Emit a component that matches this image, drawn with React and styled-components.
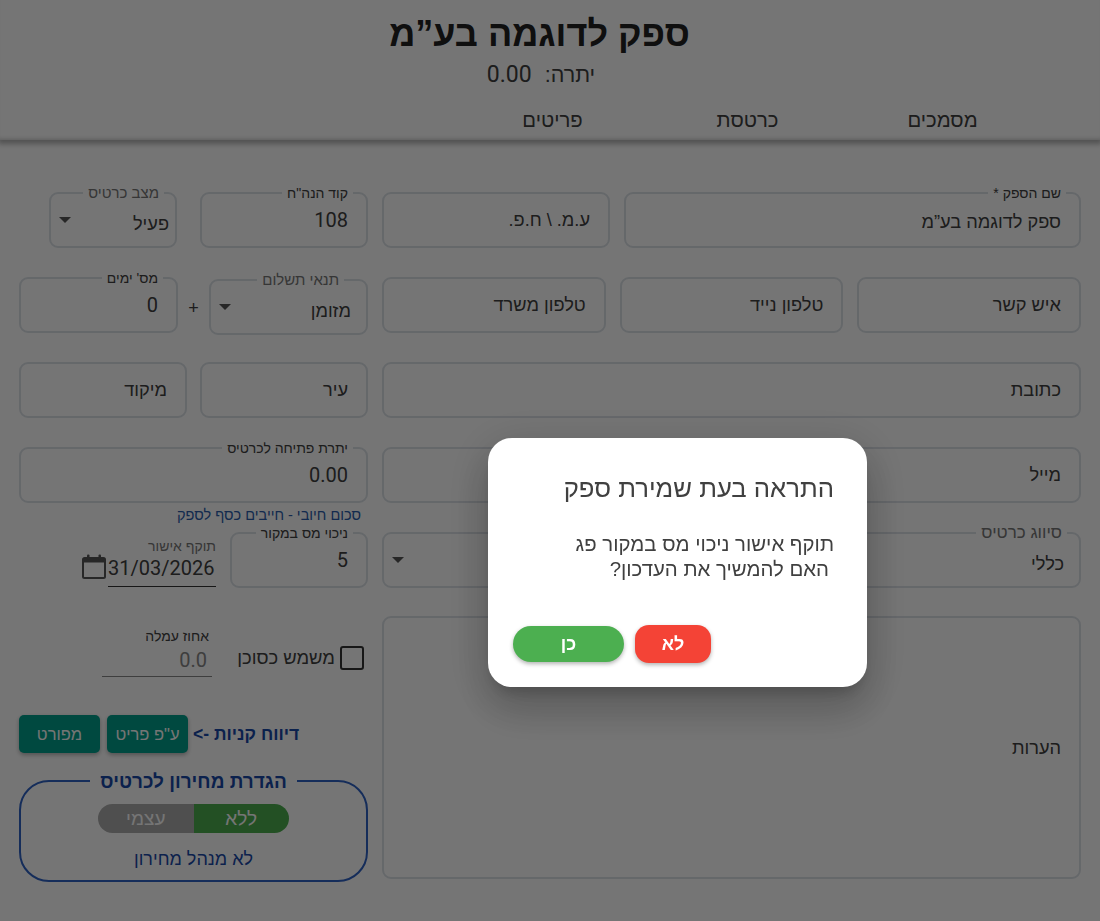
import React from 'react';
import styled, { createGlobalStyle } from 'styled-components';

const FONT = '"Liberation Sans", "Noto Sans", sans-serif';
const INK = '#404040';
const LINE = '#dde2e8';

const GlobalStyle = createGlobalStyle`
  html, body {
    margin: 0;
    padding: 0;
    background: #fff;
    font-family: ${FONT};
    color: ${INK};
  }
  * { box-sizing: border-box; }
`;

function OutlinedField({ label, value, width, grow, select, number, labelSize = 14, labelRight = 13, labelMuted, valueRight, drop }) {
  return (
    <Field $width={width} $grow={grow} $drop={drop}>
      {label && <FieldLabel $size={labelSize} $right={labelRight} $muted={labelMuted}>{label}</FieldLabel>}
      <FieldValue $select={select} $number={number} $filled={!!label} $right={valueRight}>{value}</FieldValue>
      {select && <Arrow />}
    </Field>
  );
}

function CalendarIcon() {
  return (
    <CalendarWrap>
      <svg width="24" height="25" viewBox="0 0 24 25" fill="none">
        <path d="M1 5.5a1.5 1.5 0 0 1 1.5-1.5h19a1.5 1.5 0 0 1 1.5 1.5v17a1.5 1.5 0 0 1-1.5 1.5h-19A1.5 1.5 0 0 1 1 22.5z" stroke="#555" strokeWidth="2" />
        <path d="M1 4.5h22v4H1z" fill="#555" />
        <rect x="5" y="0.5" width="2.5" height="5" rx="1" fill="#555" />
        <rect x="16.5" y="0.5" width="2.5" height="5" rx="1" fill="#555" />
      </svg>
    </CalendarWrap>
  );
}

function App() {
  return (
    <>
      <GlobalStyle />
      <Page dir="rtl">
        <Header>
          <Title>ספק לדוגמה בע”מ</Title>
          <Balance>
            <span>יתרה:</span>
            <BalanceNumber>0.00</BalanceNumber>
          </Balance>
          <Tabs>
            <Tab>מסמכים</Tab>
            <Tab>כרטסת</Tab>
            <Tab>פריטים</Tab>
          </Tabs>
        </Header>

        <Form>
          <MainColumn>
            <Row>
              <OutlinedField label="שם הספק *" value="ספק לדוגמה בע”מ" grow />
              <OutlinedField value="ע.מ. \ ח.פ." width={228} />
            </Row>
            <Row>
              <OutlinedField value="איש קשר" grow />
              <OutlinedField value="טלפון נייד" grow />
              <OutlinedField value="טלפון משרד" grow />
            </Row>
            <Row>
              <OutlinedField value="כתובת" grow />
            </Row>
            <Row>
              <OutlinedField value="מייל" grow />
            </Row>
            <Row>
              <OutlinedField label="סיווג כרטיס" value="כללי" grow select labelSize={17} labelRight={12} labelMuted />
            </Row>
            <Notes>הערות</Notes>
          </MainColumn>

          <SideColumn>
            <SideRow $gap={23}>
              <OutlinedField label='קוד הנה"ח' value="108" width={168} number />
              <OutlinedField label="מצב כרטיס" value="פעיל" width={128} select labelSize={15} labelRight={11} labelMuted valueRight={6} />
            </SideRow>
            <SideRow>
              <OutlinedField label="תנאי תשלום" value="מזומן" width={159} select labelSize={15} labelRight={22} labelMuted drop={2} />
              <Plus>+</Plus>
              <OutlinedField label="מס' ימים" value="0" width={159} number />
            </SideRow>
            <SideRow $gap={13}>
              <OutlinedField value="עיר" width={168} />
              <OutlinedField value="מיקוד" width={168} />
            </SideRow>
            <SideRow $flush>
              <OutlinedField label="יתרת פתיחה לכרטיס" value="0.00" grow number />
            </SideRow>
            <Helper>סכום חיובי - חייבים כסף לספק</Helper>
            <SideRow $gap={14}>
              <OutlinedField label="ניכוי מס במקור" value="5" width={138} number />
              <DateField>
                <DateLabel>תוקף אישור</DateLabel>
                <DateValue dir="ltr">31/03/2026</DateValue>
              </DateField>
              <CalendarIcon />
            </SideRow>
            <AgentRow>
              <CheckLabel>
                <CheckBox />
                משמש כסוכן
              </CheckLabel>
              <Commission>
                <CommissionLabel>אחוז עמלה</CommissionLabel>
                <CommissionValue>0.0</CommissionValue>
              </Commission>
            </AgentRow>
            <ReportRow>
              <ReportTitle>דיווח קניות -&gt;</ReportTitle>
              <TealButton>ע"פ פריט</TealButton>
              <TealButton>מפורט</TealButton>
            </ReportRow>
            <PriceBox>
              <PriceLegend>הגדרת מחירון לכרטיס</PriceLegend>
              <Toggle>
                <ToggleOption $active>ללא</ToggleOption>
                <ToggleOption>עצמי</ToggleOption>
              </Toggle>
              <PriceNote>לא מנהל מחירון</PriceNote>
            </PriceBox>
          </SideColumn>
        </Form>
      </Page>

      <Overlay />
      <Dialog dir="rtl">
        <DialogTitle>התראה בעת שמירת ספק</DialogTitle>
        <DialogBody>
          <div>תוקף אישור ניכוי מס במקור פג</div>
          <IndentedLine>האם להמשיך את העדכון?</IndentedLine>
        </DialogBody>
        <DialogActions>
          <NoButton>לא</NoButton>
          <YesButton>כן</YesButton>
        </DialogActions>
      </Dialog>
    </>
  );
}

const Page = styled.div`
  width: 1100px;
  height: 921px;
  overflow: hidden;
  background: #fff;
`;

const Header = styled.header`
  height: 140px;
  padding-top: 11px;
  display: flex;
  flex-direction: column;
  align-items: center;
  background: #fff;
  box-shadow: 0 2px 5px 2px rgba(0, 0, 0, 0.3), inset 0 -4px 4px -3px rgba(0, 0, 0, 0.2);
`;

const Title = styled.h1`
  margin: 0 0 0 -21px;
  font-size: 36px;
  line-height: 46px;
  font-weight: 700;
  color: #222;
`;

const Balance = styled.div`
  margin: 1px 18px 0 0;
  display: flex;
  align-items: center;
  gap: 13px;
  font-size: 21.5px;
  line-height: 34px;
  color: ${INK};
`;

const BalanceNumber = styled.span`
  font-family: Roboto, sans-serif;
  font-size: 23px;
`;

const Tabs = styled.nav`
  align-self: stretch;
  display: flex;
  padding: 0 60px 0 0;
  margin-top: 13px;
`;

const Tab = styled.div`
  width: 195px;
  text-align: center;
  font-size: 20.3px;
  line-height: 30px;
  color: ${INK};
`;

const Form = styled.main`
  display: grid;
  grid-template-columns: 699px 349px;
  column-gap: 14px;
  padding: 52px 19px 0;
`;

const MainColumn = styled.section`
  display: flex;
  flex-direction: column;
  gap: 29px;
`;

const Row = styled.div`
  display: flex;
  gap: 14px;
`;

const Field = styled.div`
  position: relative;
  height: 56px;
  margin-top: ${(p) => p.$drop || 0}px;
  flex: ${(p) => (p.$grow ? '1 1 0' : `0 0 ${p.$width}px`)};
  border: 2px solid ${LINE};
  border-radius: 9px;
  background: #fff;
`;

const FieldLabel = styled.label`
  position: absolute;
  top: -9px;
  right: ${(p) => p.$right}px;
  padding: 0 5px;
  background: #fff;
  font-size: ${(p) => p.$size}px;
  line-height: 16px;
  color: ${(p) => (p.$muted ? '#777' : INK)};
`;

const FieldValue = styled.div`
  padding-top: ${(p) => (p.$select ? 17 : p.$filled && !p.$number ? 15 : 13)}px;
  padding-right: ${(p) => p.$right ?? (p.$select ? 15 : 18)}px;
  font-family: ${(p) => (p.$number ? 'Roboto, sans-serif' : 'inherit')};
  font-size: ${(p) => (p.$number ? 20 : 18.2)}px;
  line-height: 26px;
  color: ${INK};
`;

const Arrow = styled.span`
  position: absolute;
  left: 8px;
  top: 23px;
  border-style: solid;
  border-width: 6px 6.5px 0;
  border-color: #555 transparent transparent;
`;

const Notes = styled.div`
  margin-top: -1px;
  height: 263px;
  border: 2px solid ${LINE};
  border-radius: 9px;
  padding: 117px 18px 0 0;
  font-size: 18.2px;
  line-height: 26px;
  color: ${INK};
`;

const SideColumn = styled.section`
  display: flex;
  flex-direction: column;
`;

const SideRow = styled.div`
  display: flex;
  height: 56px;
  align-items: flex-start;
  gap: ${(p) => p.$gap || 0}px;
  margin-bottom: ${(p) => (p.$flush ? 0 : 29)}px;
`;

const Plus = styled.div`
  width: 31px;
  padding-top: 18px;
  text-align: center;
  font-size: 18px;
  line-height: 26px;
  color: ${INK};
`;

const Helper = styled.div`
  height: 29px;
  padding: 2px 7px 0 0;
  font-size: 14.5px;
  line-height: 20px;
  color: #2a5caa;
`;

const DateField = styled.div`
  width: 108px;
  height: 55px;
  border-bottom: 1px solid #333;
`;

const DateLabel = styled.div`
  font-size: 14px;
  line-height: 16px;
  padding-top: 6px;
  color: #777;
`;

const DateValue = styled.div`
  font-family: Roboto, sans-serif;
  font-size: 20px;
  line-height: 26px;
  padding-top: 1px;
  color: ${INK};
  white-space: nowrap;
  text-align: left;
`;

const CalendarWrap = styled.div`
  margin: 22px -12px 0 0;
  line-height: 0;
`;

const AgentRow = styled.div`
  height: 52px;
  margin: 11px 0 35px;
  display: flex;
  align-items: flex-start;
`;

const CheckLabel = styled.label`
  display: flex;
  align-items: center;
  gap: 5px;
  margin: 18px 4px 0 0;
  width: 152px;
  font-size: 18.4px;
  line-height: 24px;
  color: ${INK};
`;

const CheckBox = styled.span`
  width: 24px;
  height: 24px;
  flex: none;
  border: 2.5px solid #333;
  border-radius: 3px;
`;

const Commission = styled.div`
  width: 110px;
  height: 49px;
  border-bottom: 1.5px solid #888;
`;

const CommissionLabel = styled.div`
  padding-right: 3px;
  font-size: 14px;
  line-height: 16px;
  color: ${INK};
`;

const CommissionValue = styled.div`
  padding: 1px 5px 0 0;
  font-family: Roboto, sans-serif;
  font-size: 20px;
  line-height: 30px;
  color: #888;
`;

const ReportRow = styled.div`
  height: 38px;
  display: flex;
  align-items: center;
  justify-content: flex-end;
  gap: 7px;
  margin-bottom: 15px;
`;

const ReportTitle = styled.div`
  margin-left: -2px;
  font-size: 17.5px;
  font-weight: 700;
  color: #1a49a8;
  white-space: nowrap;
`;

const TealButton = styled.button`
  width: 81px;
  height: 38px;
  padding: 0;
  border: 0;
  border-radius: 5px;
  background: #009f8c;
  color: #fff;
  font-family: inherit;
  font-size: 16.5px;
  box-shadow: 0 2px 4px rgba(0, 0, 0, 0.3);
`;

const PriceBox = styled.fieldset`
  margin: 0;
  padding: 0;
  height: 114px;
  border: 2px solid #2f62c4;
  border-radius: 30px;
  display: flex;
  flex-direction: column;
  align-items: center;
`;

const PriceLegend = styled.legend`
  margin: 0 auto;
  padding: 2px 10px 0;
  font-size: 19px;
  line-height: 24px;
  font-weight: 700;
  color: #1a49a8;
`;

const Toggle = styled.div`
  display: flex;
  width: 191px;
  height: 29px;
  margin-top: 10px;
  border-radius: 15px;
  overflow: hidden;
`;

const ToggleOption = styled.div`
  flex: 1;
  text-align: center;
  font-size: 19px;
  line-height: 29px;
  background: ${(p) => (p.$active ? '#4caf50' : '#adadad')};
  color: #fff;
`;

const PriceNote = styled.div`
  margin-top: 14px;
  font-size: 18px;
  line-height: 24px;
  color: #1a49a8;
`;

const Overlay = styled.div`
  position: fixed;
  inset: 0;
  background: rgba(0, 0, 0, 0.54);
`;

const Dialog = styled.div`
  position: fixed;
  left: 488px;
  top: 438px;
  width: 379px;
  height: 249px;
  display: flex;
  flex-direction: column;
  padding: 32px 33px 24px 25px;
  border-radius: 24px;
  background: #fff;
  box-shadow: 0 11px 15px -7px rgba(0, 0, 0, 0.2), 0 24px 38px 3px rgba(0, 0, 0, 0.14), 0 9px 46px 8px rgba(0, 0, 0, 0.12);
`;

const DialogTitle = styled.h2`
  margin: 0;
  font-size: 25.7px;
  line-height: 36px;
  font-weight: 400;
  color: ${INK};
`;

const DialogBody = styled.div`
  margin-top: 26px;
  font-size: 20.4px;
  line-height: 25px;
  color: ${INK};
`;

const IndentedLine = styled.div`
  padding-right: 5px;
`;

const DialogActions = styled.div`
  margin-top: auto;
  display: flex;
  justify-content: flex-end;
  align-items: center;
  gap: 11px;
`;

const NoButton = styled.button`
  width: 76px;
  height: 38px;
  padding: 0;
  border: 0;
  border-radius: 14px;
  background: #f44336;
  color: #fff;
  font-family: inherit;
  font-size: 18px;
  font-weight: 700;
  box-shadow: 0 2px 4px rgba(0, 0, 0, 0.3);
`;

const YesButton = styled(NoButton)`
  width: 111px;
  height: 36px;
  border-radius: 18px;
  background: #4caf50;
`;

export default App;
